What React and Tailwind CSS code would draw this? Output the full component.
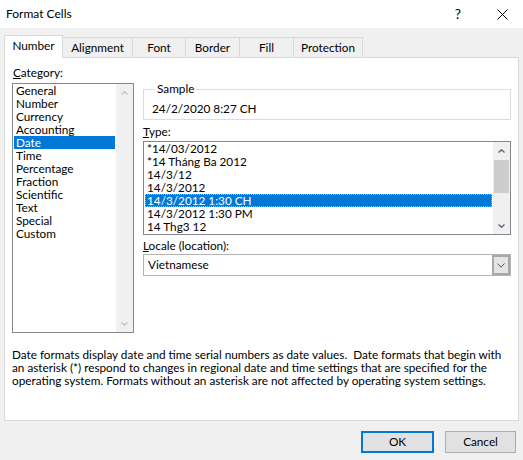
import React from "react";

function Chevron({ dir = "up", color = "#606060", w = 7, h = 4, sw = 1.3 }) {
  const d = dir === "up" ? `M0.5 ${h - 0.5} L${w / 2} 0.8 L${w - 0.5} ${h - 0.5}` : `M0.5 0.5 L${w / 2} ${h - 0.8} L${w - 0.5} 0.5`;
  return (
    <svg width={w} height={h} viewBox={`0 0 ${w} ${h}`}>
      <path d={d} fill="none" stroke={color} strokeWidth={sw} />
    </svg>
  );
}

export default function App() {
  const categories = ["General", "Number", "Currency", "Accounting", "Date", "Time", "Percentage", "Fraction", "Scientific", "Text", "Special", "Custom"];
  const types = ["*14/03/2012", "*14 Tháng Ba 2012", "14/3/12", "14/3/2012", "14/3/2012 1:30 CH", "14/3/2012 1:30 PM", "14 Thg3 12"];
  const tabs = [
    ["Alignment", "w-[70px]"],
    ["Font", "w-[53px]"],
    ["Border", "w-[54px]"],
    ["Fill", "w-[54px]"],
    ["Protection", "w-[69px]"],
  ];
  return (
    <div className="w-[523px] h-[460px] bg-[#f0f0f0] flex flex-col font-['Lato',sans-serif] text-[11.75px] leading-[16px] text-black overflow-hidden">
      {/* title bar */}
      <div className="h-[28px] bg-white flex items-center shrink-0">
        <span className="ml-[6px] text-[12px]">Format Cells</span>
        <span className="ml-auto text-[14px] mr-[36px]">?</span>
        <svg width="11" height="11" viewBox="0 0 11 11" className="mr-[15px]">
          <path d="M0.5 0.5 L10.5 10.5 M10.5 0.5 L0.5 10.5" stroke="#000" strokeWidth="1" />
        </svg>
      </div>

      {/* tabs */}
      <div className="h-[22px] mt-[7px] ml-[4px] flex items-end shrink-0">
        <div className="relative z-10 -mb-px h-[23px] w-[59px] bg-white border border-b-0 border-[#d9d9d9] flex items-center justify-center pb-[2px]">
          Number
        </div>
        {tabs.map(([t, w]) => (
          <div key={t} className={`h-[20px] ${w} bg-[#f0f0f0] border-t border-r border-[#d9d9d9] flex items-center justify-center`}>
            {t}
          </div>
        ))}
      </div>

      {/* panel */}
      <div className="mx-[4px] h-[364px] bg-white border border-[#d9d9d9] flex flex-col shrink-0">
        <div className="flex pl-[7px]">
          {/* left column */}
          <div className="w-[122px] pt-[7px]">
            <div className="ml-[1px] h-[16px]">
              <span className="underline">C</span>ategory:
            </div>
            <div className="mt-[2px] h-[250px] border border-[#828790] flex">
              <div className="flex-1 flex flex-col">
                {categories.map((c) => (
                  <div
                    key={c}
                    className={`h-[13px] leading-[13px] mx-[1px] px-[2px] whitespace-nowrap ${c === "Date" ? "bg-[#0078d7] text-white" : ""}`}
                  >
                    {c}
                  </div>
                ))}
              </div>
              <div className="w-[17px] bg-[#f0f0f0] flex flex-col justify-between">
                <div className="h-[17px] flex items-center justify-center">
                  <Chevron dir="up" color="#c3c3c3" />
                </div>
                <div className="h-[17px] flex items-center justify-center">
                  <Chevron dir="down" color="#c3c3c3" />
                </div>
              </div>
            </div>
          </div>

          {/* right column */}
          <div className="ml-[9px] w-[368px] pt-[23px]">
            <fieldset className="border border-[#dcdcdc] pl-[8px] pb-[2px]">
              <legend className="ml-[3px] px-[2px] leading-[16px]">Sample</legend>
              <div className="pt-[4px] h-[20px] leading-[16px]">24/2/2020 8:27 CH</div>
            </fieldset>
            <div className="mt-[4px] h-[16px]">
              <span className="underline">T</span>ype:
            </div>
            <div className="mt-[1px] h-[94px] border border-[#828790] flex">
              <div className="flex-1 flex flex-col">
                {types.map((t, i) => (
                  <div
                    key={t}
                    className={`h-[13px] leading-[13px] mx-[1px] px-[2px] whitespace-nowrap ${i === 4 ? "bg-[#0078d7] text-white outline-1 outline-dotted outline-[#f0a860] -outline-offset-1" : ""}`}
                  >
                    {t}
                  </div>
                ))}
              </div>
              <div className="w-[17px] bg-[#f0f0f0] flex flex-col">
                <div className="h-[17px] flex items-center justify-center">
                  <Chevron dir="up" color="#606060" />
                </div>
                <div className="mt-px h-[33px] mx-[1px] bg-[#cdcdcd]" />
                <div className="flex-1" />
                <div className="h-[17px] flex items-center justify-center">
                  <Chevron dir="down" color="#606060" />
                </div>
              </div>
            </div>
            <div className="mt-[3px] h-[16px]">
              <span className="underline">L</span>ocale (location):
            </div>
            <div className="h-[22px] border border-[#b4b4b4] flex">
              <div className="flex-1 pl-[4px] flex items-center">Vietnamese</div>
              <div className="w-[18px] bg-[#e5e5e5] border-2 border-[#a8a8a8] flex items-center justify-center">
                <Chevron dir="down" color="#555" w={8} h={5} sw={1} />
              </div>
            </div>
          </div>
        </div>

        {/* description */}
        <div className="mt-[15px] ml-[7px] leading-[13px] whitespace-pre">
          {"Date formats display date and time serial numbers as date values.  Date formats that begin with"}
          <br />
          {"an asterisk (*) respond to changes in regional date and time settings that are specified for the"}
          <br />
          {"operating system. Formats without an asterisk are not affected by operating system settings."}
        </div>
      </div>

      {/* buttons */}
      <div className="mt-[10px] flex justify-end pr-[7px] gap-[11px] shrink-0">
        <div className="w-[73px] h-[22px] bg-[#e1e1e1] border-2 border-[#0078d7] flex items-center justify-center">OK</div>
        <div className="w-[71px] h-[22px] bg-[#e1e1e1] border border-[#adadad] flex items-center justify-center">Cancel</div>
      </div>
    </div>
  );
}
